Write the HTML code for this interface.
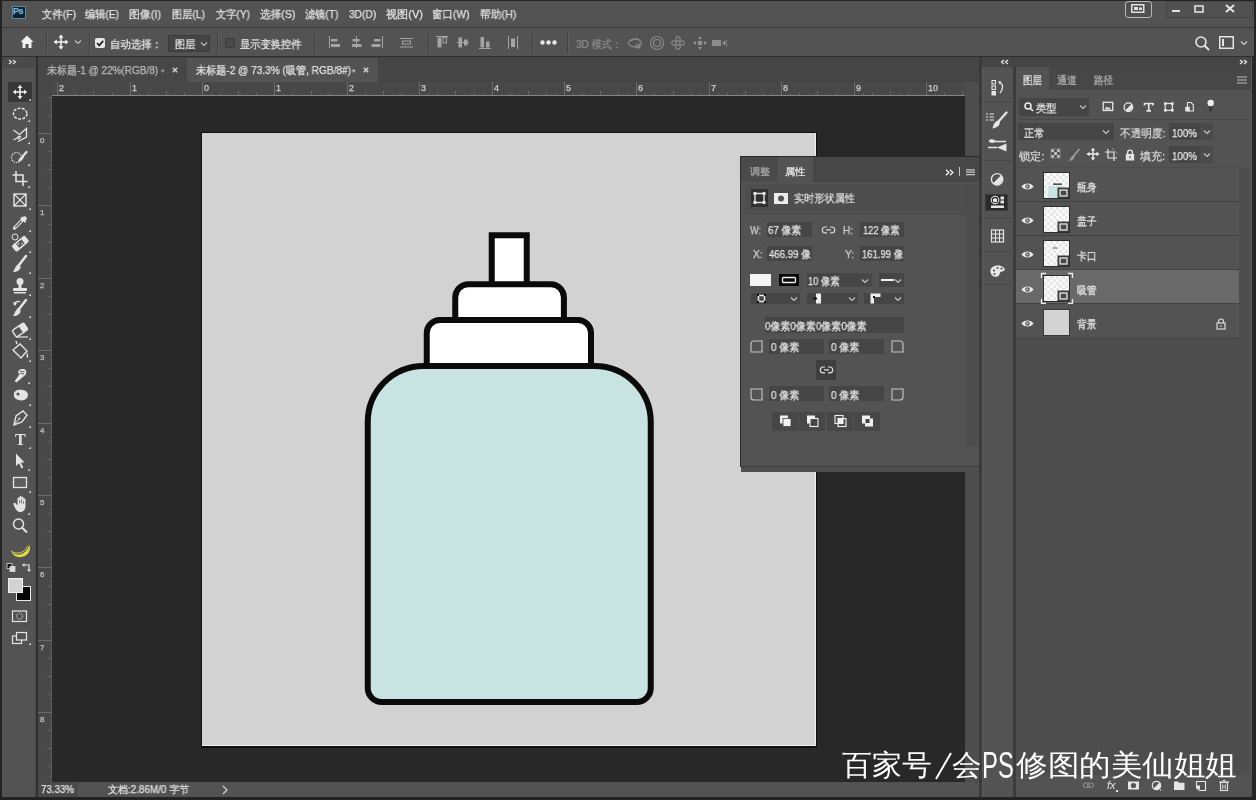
<!DOCTYPE html>
<html><head><meta charset="utf-8">
<style>
*{margin:0;padding:0;box-sizing:border-box}
html,body{width:1256px;height:800px;overflow:hidden;background:#262626;font-family:"Liberation Sans",sans-serif;color:#d8d8d8}
.a{position:absolute}
.t{position:absolute;white-space:nowrap;font-family:"Liberation Sans",sans-serif;-webkit-text-stroke-width:0.25px}
.w{-webkit-text-stroke-width:0}
.t{will-change:transform}
svg{position:absolute;overflow:visible}
</style></head><body>
<div class="a" style="left:0px;top:0px;width:1256px;height:800px;background:#232323;"></div>
<div class="a" style="left:2px;top:1px;width:1252px;height:26px;background:#535353;"></div>
<div class="a" style="left:12px;top:6px;width:14px;height:13px;background:#0c2233;border:1px solid #5b8aa6"></div>
<div class="t" style="left:13px;top:6px;font-size:9px;line-height:11px;color:#7fb4d8;font-weight:bold;letter-spacing:-0.5px;">Ps</div>
<div class="t" style="left:41.5px;top:8px;font-size:11px;line-height:13px;color:#e2e2e2;;transform:scaleX(0.9432);transform-origin:0 0;">文件(F)</div>
<div class="t" style="left:85.3px;top:8px;font-size:11px;line-height:13px;color:#e2e2e2;;transform:scaleX(0.9271);transform-origin:0 0;">编辑(E)</div>
<div class="t" style="left:129.0px;top:8px;font-size:11px;line-height:13px;color:#e2e2e2;;transform:scaleX(0.9879);transform-origin:0 0;">图像(I)</div>
<div class="t" style="left:171.8px;top:8px;font-size:11px;line-height:13px;color:#e2e2e2;;transform:scaleX(0.9308);transform-origin:0 0;">图层(L)</div>
<div class="t" style="left:215.5px;top:8px;font-size:11px;line-height:13px;color:#e2e2e2;;transform:scaleX(0.9271);transform-origin:0 0;">文字(Y)</div>
<div class="t" style="left:259.9px;top:8px;font-size:11px;line-height:13px;color:#e2e2e2;;transform:scaleX(0.9653);transform-origin:0 0;">选择(S)</div>
<div class="t" style="left:305.0px;top:8px;font-size:11px;line-height:13px;color:#e2e2e2;;transform:scaleX(0.9238);transform-origin:0 0;">滤镜(T)</div>
<div class="t" style="left:349.1px;top:8px;font-size:11px;line-height:13px;color:#e2e2e2;;transform:scaleX(0.9269);transform-origin:0 0;">3D(D)</div>
<div class="t" style="left:386.1px;top:8px;font-size:11px;line-height:13px;color:#e2e2e2;;transform:scaleX(1.0089);transform-origin:0 0;">视图(V)</div>
<div class="t" style="left:431.8px;top:8px;font-size:11px;line-height:13px;color:#e2e2e2;;transform:scaleX(0.9467);transform-origin:0 0;">窗口(W)</div>
<div class="t" style="left:480.2px;top:8px;font-size:11px;line-height:13px;color:#e2e2e2;;transform:scaleX(0.9790);transform-origin:0 0;">帮助(H)</div>
<div class="a" style="left:1125px;top:1px;width:27px;height:17px;background:#505050;border:1px solid #b8b8b8;border-radius:3px"></div>
<svg style="left:1131px;top:4px;" width="15" height="10" viewBox="0 0 15 10"><rect x="0.75" y="0.75" width="12" height="7.5" fill="none" stroke="#e0e0e0" stroke-width="1.5"/><rect x="3" y="3" width="4" height="3" fill="#e0e0e0"/><rect x="8" y="3.5" width="3" height="2.5" fill="#e0e0e0"/></svg>
<div class="a" style="left:1166px;top:1px;width:87px;height:17px;background:#515151;border:1px solid #464646"></div>
<div class="a" style="left:1172px;top:10px;width:8px;height:2px;background:#e0e0e0;"></div>
<svg style="left:1194px;top:5px;" width="10" height="8" viewBox="0 0 10 8"><rect x="1" y="1" width="8" height="6" fill="none" stroke="#e0e0e0" stroke-width="1.6"/></svg>
<svg style="left:1225px;top:4px;" width="10" height="9" viewBox="0 0 10 9"><path d="M1 1L9 8M9 1L1 8" stroke="#e8e8e8" stroke-width="1.8"/></svg>
<div class="a" style="left:2px;top:27px;width:1252px;height:1px;background:#3a3a3a;"></div>
<div class="a" style="left:2px;top:28px;width:1252px;height:28px;background:#535353;"></div>
<div class="a" style="left:2px;top:56px;width:1252px;height:1px;background:#2e2e2e;"></div>
<svg style="left:20px;top:35px;" width="14" height="14" viewBox="0 0 14 14"><path d="M7 0.5L0.5 7H2.5V13H5.5V9H8.5V13H11.5V7H13.5Z" fill="#f0f0f0"/></svg>
<div class="a" style="left:46px;top:33px;width:1px;height:20px;background:#404040;"></div>
<div class="a" style="left:47px;top:33px;width:1px;height:20px;background:#5e5e5e;"></div>
<svg style="left:0px;top:0px;" width="1" height="1" viewBox="0 0 1 1"><g transform="translate(61,42) scale(1.0)"><path d="M0 -6.5V6.5M-6.5 0H6.5" stroke="#eeeeee" stroke-width="1.6"/><path d="M0 -7.5L-2.6 -4.2H2.6Z M0 7.5L-2.6 4.2H2.6Z M-7.5 0L-4.2 -2.6V2.6Z M7.5 0L4.2 -2.6V2.6Z" fill="#eeeeee"/></g></svg>
<svg style="left:74px;top:39px;" width="9" height="6" viewBox="0 0 9 6"><path d="M1 1.5L4 4.5L7 1.5" fill="none" stroke="#bdbdbd" stroke-width="1.2"/></svg>
<div class="a" style="left:89px;top:33px;width:1px;height:20px;background:#404040;"></div>
<div class="a" style="left:90px;top:33px;width:1px;height:20px;background:#5e5e5e;"></div>
<div class="a" style="left:95px;top:38px;width:10px;height:10px;background:#e8e8e8;border-radius:2px"></div>
<svg style="left:95px;top:38px;" width="10" height="10" viewBox="0 0 10 10"><path d="M2 5L4.2 7.3L8.2 2.8" fill="none" stroke="#222" stroke-width="1.8"/></svg>
<div class="t" style="left:109.5px;top:38px;font-size:11px;line-height:13px;color:#e2e2e2;;transform:scaleX(0.9455);transform-origin:0 0;">自动选择：</div>
<div class="a" style="left:168px;top:35px;width:42px;height:17px;background:#454545;border:1px solid #3c3c3c"></div>
<div class="t" style="left:174.5px;top:38px;font-size:11px;line-height:13px;color:#e6e6e6;;transform:scaleX(0.9318);transform-origin:0 0;">图层</div>
<svg style="left:200px;top:41px;" width="9" height="6" viewBox="0 0 9 6"><path d="M1 1.5L4 4.5L7 1.5" fill="none" stroke="#bdbdbd" stroke-width="1.2"/></svg>
<div class="a" style="left:217px;top:33px;width:1px;height:20px;background:#404040;"></div>
<div class="a" style="left:218px;top:33px;width:1px;height:20px;background:#5e5e5e;"></div>
<div class="a" style="left:225px;top:38px;width:10px;height:10px;background:#4a4a4a;border:1px solid #3a3a3a;border-radius:2px"></div>
<div class="t" style="left:239.5px;top:38px;font-size:11px;line-height:13px;color:#e2e2e2;;transform:scaleX(0.9318);transform-origin:0 0;">显示变换控件</div>
<div class="a" style="left:314px;top:33px;width:1px;height:20px;background:#404040;"></div>
<div class="a" style="left:315px;top:33px;width:1px;height:20px;background:#5e5e5e;"></div>
<svg style="left:0px;top:0px;" width="1" height="1" viewBox="0 0 1 1"><g fill="#a4a4a4"><rect x="329" y="36" width="1" height="12"/><rect x="331" y="39" width="6.5" height="2.5"/><rect x="331" y="44" width="9" height="3"/></g><g fill="#a4a4a4"><rect x="356" y="36" width="1" height="12"/><rect x="352.5" y="39" width="7" height="2.5"/><rect x="352" y="44" width="9.5" height="3"/></g><g fill="#a4a4a4"><rect x="382" y="36" width="1" height="12"/><rect x="374" y="39" width="6.5" height="2.5"/><rect x="371.5" y="44" width="9" height="3"/></g><g fill="#a4a4a4"><rect x="400" y="38" width="13" height="1"/><rect x="402.5" y="41" width="8" height="3" fill="none" stroke="#a4a4a4" stroke-width="1"/><rect x="400" y="46.5" width="13" height="1"/></g><g fill="#a4a4a4"><rect x="436" y="36" width="12" height="1"/><rect x="437.5" y="37.5" width="4" height="10"/><rect x="443" y="37.5" width="3.5" height="5.5" fill="none" stroke="#a4a4a4" stroke-width="1"/></g><g fill="#a4a4a4"><rect x="457" y="42" width="12" height="1"/><rect x="458.5" y="37.5" width="3.5" height="10"/><rect x="464" y="39.5" width="3.5" height="6"/></g><g fill="#a4a4a4"><rect x="479" y="48" width="12" height="1"/><rect x="480.5" y="37" width="3.5" height="10.5"/><rect x="486" y="41.5" width="3.5" height="6"/></g><g fill="#a4a4a4"><rect x="508" y="36" width="1" height="13"/><rect x="511" y="38.5" width="4" height="8.5"/><rect x="517" y="36" width="1" height="13"/></g></svg>
<div class="a" style="left:428px;top:33px;width:1px;height:20px;background:#404040;"></div>
<div class="a" style="left:429px;top:33px;width:1px;height:20px;background:#5e5e5e;"></div>
<div class="a" style="left:532px;top:33px;width:1px;height:20px;background:#404040;"></div>
<div class="a" style="left:533px;top:33px;width:1px;height:20px;background:#5e5e5e;"></div>
<svg style="left:540px;top:40px;" width="20" height="5" viewBox="0 0 20 5"><circle cx="2.5" cy="2.5" r="2.2" fill="#e8e8e8"/><circle cx="8.5" cy="2.5" r="2.2" fill="#e8e8e8"/><circle cx="14.5" cy="2.5" r="2.2" fill="#e8e8e8"/></svg>
<div class="a" style="left:567px;top:33px;width:1px;height:20px;background:#404040;"></div>
<div class="a" style="left:568px;top:33px;width:1px;height:20px;background:#5e5e5e;"></div>
<div class="t" style="left:575.5px;top:38px;font-size:11px;line-height:13px;color:#8c8c8c;;transform:scaleX(0.9177);transform-origin:0 0;">3D 模式：</div>
<svg style="left:0px;top:0px;" width="1" height="1" viewBox="0 0 1 1">
<g transform="translate(635,43)" fill="none" stroke="#8e8e8e" stroke-width="1.1"><ellipse cx="0" cy="0" rx="6.5" ry="4"/><path d="M-4 -2C-1 -5 3 -5 5 -2"/><circle cx="3" cy="3" r="2"/></g>
<g transform="translate(657,43)" fill="none" stroke="#8e8e8e" stroke-width="1.1"><circle r="6.5"/><circle r="3.5"/></g>
<g transform="translate(678,43)" fill="none" stroke="#8e8e8e" stroke-width="1.1"><circle cx="0" cy="-4" r="2.2"/><circle cx="0" cy="4" r="2.2"/><circle cx="-4" cy="0" r="2.2"/><circle cx="4" cy="0" r="2.2"/></g>
<g transform="translate(700,43)" fill="#8e8e8e"><circle r="2.5"/><path d="M0 -7L-2 -4H2Z M0 7L-2 4H2Z M-7 0L-4 -2V2Z M7 0L4 -2V2Z"/></g>
<g transform="translate(712,39)" fill="#8e8e8e"><rect x="0" y="1" width="9" height="6"/><path d="M10 4L13 1.5V6.5Z"/><path d="M15 0.5C13.5 2.5 13.5 5.5 15 7.5" fill="none" stroke="#8e8e8e" stroke-width="1"/></g>
</svg>
<svg style="left:1195px;top:36px;" width="16" height="16" viewBox="0 0 16 16"><circle cx="6" cy="6" r="5" fill="none" stroke="#e6e6e6" stroke-width="1.6"/><path d="M9.5 9.5L14 14" stroke="#e6e6e6" stroke-width="2"/></svg>
<svg style="left:1219px;top:36px;" width="16" height="14" viewBox="0 0 16 14"><rect x="0.75" y="0.75" width="13.5" height="11.5" fill="none" stroke="#e6e6e6" stroke-width="1.5"/><rect x="3" y="3" width="2" height="7" fill="#e6e6e6"/></svg>
<svg style="left:1240px;top:40px;" width="9" height="6" viewBox="0 0 9 6"><path d="M1 1.5L4 4.5L7 1.5" fill="none" stroke="#cfcfcf" stroke-width="1.2"/></svg>
<div class="a" style="left:2px;top:57px;width:34px;height:740px;background:#535353;"></div>
<div class="a" style="left:35px;top:57px;width:1px;height:740px;background:#474747;"></div>
<div class="a" style="left:36px;top:57px;width:2px;height:740px;background:#2f2f2f;"></div>
<div class="a" style="left:2px;top:57px;width:34px;height:10px;background:#4a4a4a;"></div>
<svg style="left:8px;top:59px;" width="10" height="6" viewBox="0 0 10 6"><path d="M1 1L3.5 3L1 5M5 1L7.5 3L5 5" fill="none" stroke="#e0e0e0" stroke-width="1.2"/></svg>
<div class="a" style="left:5px;top:67px;width:28px;height:1px;background:#474747;"></div>
<div class="a" style="left:8px;top:82px;width:24px;height:20px;background:#383838;"></div>
<div class="t" style="left:15px;top:431px;font-size:16px;line-height:18px;color:#e4e4e4;font-family:'Liberation Serif',serif;font-weight:bold;-webkit-text-stroke-width:0">T</div>
<svg style="left:0px;top:0px;" width="1" height="1" viewBox="0 0 1 1"><g transform="translate(20,92) scale(0.95)"><path d="M0 -6.5V6.5M-6.5 0H6.5" stroke="#f0f0f0" stroke-width="1.6"/><path d="M0 -7.5L-2.6 -4.2H2.6Z M0 7.5L-2.6 4.2H2.6Z M-7.5 0L-4.2 -2.6V2.6Z M7.5 0L4.2 -2.6V2.6Z" fill="#f0f0f0"/></g><path d="M31 101L28.5 101L31 98.5Z" fill="#cfcfcf"/><ellipse cx="20.2" cy="113.6" rx="6.8" ry="5.4" fill="none" stroke="#e4e4e4" stroke-width="1.5" stroke-dasharray="3 1.3"/><path d="M30 122L27.5 122L30 119.5Z" fill="#cfcfcf"/><path d="M13.5 130L19.5 134.5L26.5 128.5L26.5 137L18 141.5" fill="none" stroke="#e4e4e4" stroke-width="1.3"/><path d="M13.5 140L21 136" stroke="#e4e4e4" stroke-width="1.2"/><circle cx="19" cy="137.5" r="1.4" fill="none" stroke="#e4e4e4" stroke-width="1"/><path d="M30 144L27.5 144L30 141.5Z" fill="#cfcfcf"/><circle cx="16.5" cy="157.5" r="5" fill="none" stroke="#e4e4e4" stroke-width="1.2" stroke-dasharray="1.3 1"/><path d="M26.5 152L23 156" stroke="#e4e4e4" stroke-width="2.2" stroke-linecap="round"/><path d="M23.5 155.5C21 156 18.5 159 18 162C21 161.5 23.5 159 24 157Z" fill="#e4e4e4"/><path d="M30 166L27.5 166L30 163.5Z" fill="#cfcfcf"/><path d="M16 171V181.5H27.5M12.5 175H23V186" fill="none" stroke="#e4e4e4" stroke-width="1.6"/><path d="M30 188L27.5 188L30 185.5Z" fill="#cfcfcf"/><rect x="14" y="194" width="12" height="12" fill="none" stroke="#e4e4e4" stroke-width="1.4"/><path d="M14 194L26 206M26 194L14 206" stroke="#e4e4e4" stroke-width="1.1"/><path d="M31 210L28.5 210L31 207.5Z" fill="#cfcfcf"/><path d="M14.5 228L22 220.5" stroke="#e4e4e4" stroke-width="3.2" stroke-linecap="round"/><path d="M15.2 227.3L21.5 221" stroke="#535353" stroke-width="1.2"/><path d="M21 217.5L25.5 222" stroke="#e4e4e4" stroke-width="2.2"/><circle cx="24.5" cy="218.5" r="2.3" fill="#e4e4e4"/><path d="M31 232L28.5 232L31 229.5Z" fill="#cfcfcf"/><g transform="rotate(-40 20 244)"><rect x="12" y="240" width="17" height="8" rx="2" fill="#e4e4e4"/><rect x="17" y="241.5" width="7" height="5" fill="#535353"/><circle cx="19" cy="243" r="0.8" fill="#e4e4e4"/><circle cx="22" cy="245" r="0.8" fill="#e4e4e4"/></g><circle cx="15" cy="237" r="3" fill="none" stroke="#e4e4e4" stroke-width="1"/><path d="M31 253L28.5 253L31 250.5Z" fill="#cfcfcf"/><path d="M26 256L19 265" stroke="#e4e4e4" stroke-width="2.5" stroke-linecap="round"/><path d="M19 264C15 265 15 270 13 272C17 272 21 270 20.5 266Z" fill="#e4e4e4"/><path d="M31 274L28.5 274L31 271.5Z" fill="#cfcfcf"/><circle cx="20" cy="281.5" r="3.5" fill="#e4e4e4"/><rect x="18.5" y="284" width="3" height="4" fill="#e4e4e4"/><rect x="13" y="288" width="14" height="3" rx="1" fill="#e4e4e4"/><rect x="14" y="292" width="12" height="1.5" fill="#e4e4e4"/><path d="M31 296L28.5 296L31 293.5Z" fill="#cfcfcf"/><path d="M26 300L19 309" stroke="#e4e4e4" stroke-width="2.5" stroke-linecap="round"/><path d="M19 308C15 309 15 314 13 316C17 316 21 314 20.5 310Z" fill="#e4e4e4"/><path d="M14 305A4 4 0 0 1 20 302" fill="none" stroke="#e4e4e4" stroke-width="1.2"/><path d="M13 302L15 306L17 303Z" fill="#e4e4e4"/><path d="M31 318L28.5 318L31 315.5Z" fill="#cfcfcf"/><g transform="rotate(-35 20 330)"><rect x="13" y="326" width="14" height="8" rx="1.5" fill="none" stroke="#e4e4e4" stroke-width="1.4"/><rect x="21" y="326" width="6" height="8" fill="#e4e4e4"/></g><path d="M16 337H28" stroke="#e4e4e4" stroke-width="1.2"/><path d="M31 340L28.5 340L31 337.5Z" fill="#cfcfcf"/><path d="M13 350L20 344L27 351L21 358Z" fill="none" stroke="#e4e4e4" stroke-width="1.4"/><path d="M17 344L16 341" stroke="#e4e4e4" stroke-width="1.3"/><path d="M27 352C28 355 29 357 27.5 358C26 357 26.5 355 27 352Z" fill="#e4e4e4"/><path d="M31 362L28.5 362L31 359.5Z" fill="#cfcfcf"/><path d="M18.5 371C20 368.5 24.5 368.5 26 370.5C27 372.5 25.5 375.5 23.5 376.5L17 382C15.8 382.8 14.5 381.5 15.2 380.3L19.5 374.5C18.3 373.5 18 372 18.5 371Z" fill="#e4e4e4"/><path d="M20 371.3L24.5 371.8M19.8 373.3L24 374" stroke="#535353" stroke-width="0.9"/><path d="M30 384L27.5 384L30 381.5Z" fill="#cfcfcf"/><path d="M14 395C13 391 18 389 23 390C28 391 29 395 27 398C25 401 19 401 16 399C14 398 14 396 14 395Z" fill="#e4e4e4"/><circle cx="18" cy="394" r="1.6" fill="#535353"/><path d="M31 406L28.5 406L31 403.5Z" fill="#cfcfcf"/><path d="M14 425L16 416L23 411L27 415L22 422L14 425Z" fill="none" stroke="#e4e4e4" stroke-width="1.4"/><path d="M14 425L19 419" stroke="#e4e4e4" stroke-width="1"/><circle cx="19.5" cy="418.5" r="1" fill="#e4e4e4"/><path d="M31 428L28.5 428L31 425.5Z" fill="#cfcfcf"/><path d="M31 449L28.5 449L31 446.5Z" fill="#cfcfcf"/><path d="M16 453.5V466L19 463.3L21.5 468.5L23.3 467.6L20.8 462.5H24.5Z" fill="#e4e4e4"/><path d="M30 471L27.5 471L30 468.5Z" fill="#cfcfcf"/><rect x="13.5" y="477.5" width="13" height="10" fill="#5e5e5e" stroke="#e4e4e4" stroke-width="1.3"/><path d="M31 493L28.5 493L31 490.5Z" fill="#cfcfcf"/><path d="M13.5 504.5C13 503 14.5 502.3 15.5 503.3L17.5 505.5V498.5C17.5 497.2 19.5 497.2 19.5 498.5V503.5V497C19.5 495.7 21.5 495.7 21.5 497V503.5V497.8C21.5 496.5 23.5 496.5 23.5 497.8V503.8V499.5C23.5 498.3 25.5 498.3 25.5 499.5V506C25.5 509.5 23.5 512 20.5 512C17.5 512 16 510.5 13.5 504.5Z" fill="#e4e4e4"/><path d="M19.5 503.5V500M21.5 503.5V499M23.5 503.8V501" stroke="#535353" stroke-width="0.7"/><path d="M30 515L27.5 515L30 512.5Z" fill="#cfcfcf"/><circle cx="18.5" cy="524" r="5" fill="none" stroke="#e4e4e4" stroke-width="1.5"/><path d="M22 527.5L27 532.5" stroke="#e4e4e4" stroke-width="2"/><path d="M11 550.5C14 556.5 25 557 29.5 545C31 549 29 554 25 556C19 558.5 13 557 11 550.5Z" fill="#e2dc3c"/><path d="M11.5 551C15 554 23 555 28 546" fill="none" stroke="#f4f08a" stroke-width="0.8"/><path d="M28.5 543.5L30 545.5" stroke="#707028" stroke-width="1.5"/><rect x="7" y="563.5" width="5" height="5" fill="#111" stroke="#ddd" stroke-width="0.8"/><rect x="10" y="566.5" width="5" height="5" fill="#ddd" stroke="#ddd" stroke-width="0.8"/><path d="M24 565H29V570" fill="none" stroke="#e4e4e4" stroke-width="1.2"/><path d="M22 565L24.5 563V567Z M29 572L27 569.5H31Z" fill="#e4e4e4"/></svg>
<div class="a" style="left:16px;top:586px;width:15px;height:15px;background:#050505;border:1px solid #e8e8e8"></div>
<div class="a" style="left:8px;top:578px;width:15px;height:15px;background:#d3d3d3;border:1px solid #f2f2f2"></div>
<svg style="left:0px;top:0px;" width="1" height="1" viewBox="0 0 1 1"><rect x="12.5" y="611" width="14" height="10.5" fill="none" stroke="#e4e4e4" stroke-width="1.2"/><circle cx="19.5" cy="616.2" r="3" fill="none" stroke="#e4e4e4" stroke-width="1" stroke-dasharray="1.2 1"/><rect x="12.5" y="636" width="9" height="7.5" fill="#535353" stroke="#e4e4e4" stroke-width="1.2"/><rect x="16.5" y="632.5" width="10" height="7.5" fill="#535353" stroke="#e4e4e4" stroke-width="1.2"/><path d="M31 645L28.5 645L31 642.5Z" fill="#cfcfcf"/></svg>
<div class="a" style="left:38px;top:57px;width:941px;height:25px;background:#454545;"></div>
<div class="a" style="left:39px;top:58px;width:146px;height:24px;background:#474747;"></div>
<div class="t" style="left:47px;top:64px;font-size:11px;line-height:13px;color:#bcbcbc;;transform:scaleX(0.9067);transform-origin:0 0;">未标题-1 @ 22%(RGB/8)</div>
<div class="t" style="left:161px;top:67px;font-size:9px;line-height:11px;color:#9a9a9a;;">*</div>
<svg style="left:172px;top:67px;" width="6" height="6" viewBox="0 0 6 6"><path d="M0.8 0.8L5.2 5.2M5.2 0.8L0.8 5.2" stroke="#d0d0d0" stroke-width="1.4"/></svg>
<div class="a" style="left:187px;top:58px;width:191px;height:24px;background:#535353;"></div>
<div class="t" style="left:195.5px;top:64px;font-size:11px;line-height:13px;color:#e4e4e4;;transform:scaleX(0.9178);transform-origin:0 0;">未标题-2 @ 73.3% (吸管, RGB/8#)</div>
<div class="t" style="left:352px;top:67px;font-size:9px;line-height:11px;color:#c0c0c0;;">*</div>
<svg style="left:363px;top:67px;" width="6" height="6" viewBox="0 0 6 6"><path d="M0.8 0.8L5.2 5.2M5.2 0.8L0.8 5.2" stroke="#d8d8d8" stroke-width="1.4"/></svg>
<div class="a" style="left:38px;top:82px;width:927px;height:14px;background:#484848;"></div>
<div class="a" style="left:38px;top:96px;width:14px;height:686px;background:#484848;"></div>
<div class="a" style="left:38px;top:82px;width:14px;height:14px;background:#474747;"></div>
<div class="a" style="left:52px;top:95px;width:913px;height:1px;background:#858585;"></div>
<div class="a" style="left:51px;top:96px;width:1px;height:686px;background:#5c5c5c;"></div>
<svg style="left:0px;top:0px;" width="1" height="1" viewBox="0 0 1 1"><rect x="57" y="82" width="1" height="13" fill="#6c6c6c"/><rect x="66" y="93" width="1" height="2" fill="#5c5c5c"/><rect x="75" y="92" width="1" height="3" fill="#626262"/><rect x="84" y="93" width="1" height="2" fill="#5c5c5c"/><rect x="93" y="91" width="1" height="4" fill="#6a6a6a"/><rect x="102" y="93" width="1" height="2" fill="#5c5c5c"/><rect x="112" y="92" width="1" height="3" fill="#626262"/><rect x="121" y="93" width="1" height="2" fill="#5c5c5c"/><rect x="130" y="82" width="1" height="13" fill="#6c6c6c"/><rect x="139" y="93" width="1" height="2" fill="#5c5c5c"/><rect x="148" y="92" width="1" height="3" fill="#626262"/><rect x="157" y="93" width="1" height="2" fill="#5c5c5c"/><rect x="166" y="91" width="1" height="4" fill="#6a6a6a"/><rect x="175" y="93" width="1" height="2" fill="#5c5c5c"/><rect x="184" y="92" width="1" height="3" fill="#626262"/><rect x="193" y="93" width="1" height="2" fill="#5c5c5c"/><rect x="202" y="82" width="1" height="13" fill="#6c6c6c"/><rect x="211" y="93" width="1" height="2" fill="#5c5c5c"/><rect x="220" y="92" width="1" height="3" fill="#626262"/><rect x="229" y="93" width="1" height="2" fill="#5c5c5c"/><rect x="238" y="91" width="1" height="4" fill="#6a6a6a"/><rect x="247" y="93" width="1" height="2" fill="#5c5c5c"/><rect x="256" y="92" width="1" height="3" fill="#626262"/><rect x="265" y="93" width="1" height="2" fill="#5c5c5c"/><rect x="274" y="82" width="1" height="13" fill="#6c6c6c"/><rect x="283" y="93" width="1" height="2" fill="#5c5c5c"/><rect x="292" y="92" width="1" height="3" fill="#626262"/><rect x="302" y="93" width="1" height="2" fill="#5c5c5c"/><rect x="311" y="91" width="1" height="4" fill="#6a6a6a"/><rect x="320" y="93" width="1" height="2" fill="#5c5c5c"/><rect x="329" y="92" width="1" height="3" fill="#626262"/><rect x="338" y="93" width="1" height="2" fill="#5c5c5c"/><rect x="347" y="82" width="1" height="13" fill="#6c6c6c"/><rect x="356" y="93" width="1" height="2" fill="#5c5c5c"/><rect x="365" y="92" width="1" height="3" fill="#626262"/><rect x="374" y="93" width="1" height="2" fill="#5c5c5c"/><rect x="383" y="91" width="1" height="4" fill="#6a6a6a"/><rect x="392" y="93" width="1" height="2" fill="#5c5c5c"/><rect x="401" y="92" width="1" height="3" fill="#626262"/><rect x="410" y="93" width="1" height="2" fill="#5c5c5c"/><rect x="419" y="82" width="1" height="13" fill="#6c6c6c"/><rect x="428" y="93" width="1" height="2" fill="#5c5c5c"/><rect x="437" y="92" width="1" height="3" fill="#626262"/><rect x="446" y="93" width="1" height="2" fill="#5c5c5c"/><rect x="455" y="91" width="1" height="4" fill="#6a6a6a"/><rect x="464" y="93" width="1" height="2" fill="#5c5c5c"/><rect x="474" y="92" width="1" height="3" fill="#626262"/><rect x="483" y="93" width="1" height="2" fill="#5c5c5c"/><rect x="492" y="82" width="1" height="13" fill="#6c6c6c"/><rect x="501" y="93" width="1" height="2" fill="#5c5c5c"/><rect x="510" y="92" width="1" height="3" fill="#626262"/><rect x="519" y="93" width="1" height="2" fill="#5c5c5c"/><rect x="528" y="91" width="1" height="4" fill="#6a6a6a"/><rect x="537" y="93" width="1" height="2" fill="#5c5c5c"/><rect x="546" y="92" width="1" height="3" fill="#626262"/><rect x="555" y="93" width="1" height="2" fill="#5c5c5c"/><rect x="564" y="82" width="1" height="13" fill="#6c6c6c"/><rect x="573" y="93" width="1" height="2" fill="#5c5c5c"/><rect x="582" y="92" width="1" height="3" fill="#626262"/><rect x="591" y="93" width="1" height="2" fill="#5c5c5c"/><rect x="600" y="91" width="1" height="4" fill="#6a6a6a"/><rect x="609" y="93" width="1" height="2" fill="#5c5c5c"/><rect x="618" y="92" width="1" height="3" fill="#626262"/><rect x="627" y="93" width="1" height="2" fill="#5c5c5c"/><rect x="636" y="82" width="1" height="13" fill="#6c6c6c"/><rect x="645" y="93" width="1" height="2" fill="#5c5c5c"/><rect x="654" y="92" width="1" height="3" fill="#626262"/><rect x="664" y="93" width="1" height="2" fill="#5c5c5c"/><rect x="673" y="91" width="1" height="4" fill="#6a6a6a"/><rect x="682" y="93" width="1" height="2" fill="#5c5c5c"/><rect x="691" y="92" width="1" height="3" fill="#626262"/><rect x="700" y="93" width="1" height="2" fill="#5c5c5c"/><rect x="709" y="82" width="1" height="13" fill="#6c6c6c"/><rect x="718" y="93" width="1" height="2" fill="#5c5c5c"/><rect x="727" y="92" width="1" height="3" fill="#626262"/><rect x="736" y="93" width="1" height="2" fill="#5c5c5c"/><rect x="745" y="91" width="1" height="4" fill="#6a6a6a"/><rect x="754" y="93" width="1" height="2" fill="#5c5c5c"/><rect x="763" y="92" width="1" height="3" fill="#626262"/><rect x="772" y="93" width="1" height="2" fill="#5c5c5c"/><rect x="781" y="82" width="1" height="13" fill="#6c6c6c"/><rect x="790" y="93" width="1" height="2" fill="#5c5c5c"/><rect x="799" y="92" width="1" height="3" fill="#626262"/><rect x="808" y="93" width="1" height="2" fill="#5c5c5c"/><rect x="817" y="91" width="1" height="4" fill="#6a6a6a"/><rect x="826" y="93" width="1" height="2" fill="#5c5c5c"/><rect x="836" y="92" width="1" height="3" fill="#626262"/><rect x="845" y="93" width="1" height="2" fill="#5c5c5c"/><rect x="854" y="82" width="1" height="13" fill="#6c6c6c"/><rect x="863" y="93" width="1" height="2" fill="#5c5c5c"/><rect x="872" y="92" width="1" height="3" fill="#626262"/><rect x="881" y="93" width="1" height="2" fill="#5c5c5c"/><rect x="890" y="91" width="1" height="4" fill="#6a6a6a"/><rect x="899" y="93" width="1" height="2" fill="#5c5c5c"/><rect x="908" y="92" width="1" height="3" fill="#626262"/><rect x="917" y="93" width="1" height="2" fill="#5c5c5c"/><rect x="926" y="82" width="1" height="13" fill="#6c6c6c"/><rect x="935" y="93" width="1" height="2" fill="#5c5c5c"/><rect x="944" y="92" width="1" height="3" fill="#626262"/><rect x="953" y="93" width="1" height="2" fill="#5c5c5c"/><rect x="962" y="91" width="1" height="4" fill="#6a6a6a"/><rect x="47" y="97" width="4" height="1" fill="#6a6a6a"/><rect x="49" y="106" width="2" height="1" fill="#5c5c5c"/><rect x="48" y="115" width="3" height="1" fill="#626262"/><rect x="49" y="124" width="2" height="1" fill="#5c5c5c"/><rect x="38" y="133" width="13" height="1" fill="#6c6c6c"/><rect x="49" y="142" width="2" height="1" fill="#5c5c5c"/><rect x="48" y="151" width="3" height="1" fill="#626262"/><rect x="49" y="160" width="2" height="1" fill="#5c5c5c"/><rect x="47" y="169" width="4" height="1" fill="#6a6a6a"/><rect x="49" y="178" width="2" height="1" fill="#5c5c5c"/><rect x="48" y="187" width="3" height="1" fill="#626262"/><rect x="49" y="196" width="2" height="1" fill="#5c5c5c"/><rect x="38" y="205" width="13" height="1" fill="#6c6c6c"/><rect x="49" y="214" width="2" height="1" fill="#5c5c5c"/><rect x="48" y="224" width="3" height="1" fill="#626262"/><rect x="49" y="233" width="2" height="1" fill="#5c5c5c"/><rect x="47" y="242" width="4" height="1" fill="#6a6a6a"/><rect x="49" y="251" width="2" height="1" fill="#5c5c5c"/><rect x="48" y="260" width="3" height="1" fill="#626262"/><rect x="49" y="269" width="2" height="1" fill="#5c5c5c"/><rect x="38" y="278" width="13" height="1" fill="#6c6c6c"/><rect x="49" y="287" width="2" height="1" fill="#5c5c5c"/><rect x="48" y="296" width="3" height="1" fill="#626262"/><rect x="49" y="305" width="2" height="1" fill="#5c5c5c"/><rect x="47" y="314" width="4" height="1" fill="#6a6a6a"/><rect x="49" y="323" width="2" height="1" fill="#5c5c5c"/><rect x="48" y="332" width="3" height="1" fill="#626262"/><rect x="49" y="341" width="2" height="1" fill="#5c5c5c"/><rect x="38" y="350" width="13" height="1" fill="#6c6c6c"/><rect x="49" y="359" width="2" height="1" fill="#5c5c5c"/><rect x="48" y="368" width="3" height="1" fill="#626262"/><rect x="49" y="377" width="2" height="1" fill="#5c5c5c"/><rect x="47" y="386" width="4" height="1" fill="#6a6a6a"/><rect x="49" y="395" width="2" height="1" fill="#5c5c5c"/><rect x="48" y="404" width="3" height="1" fill="#626262"/><rect x="49" y="414" width="2" height="1" fill="#5c5c5c"/><rect x="38" y="423" width="13" height="1" fill="#6c6c6c"/><rect x="49" y="432" width="2" height="1" fill="#5c5c5c"/><rect x="48" y="441" width="3" height="1" fill="#626262"/><rect x="49" y="450" width="2" height="1" fill="#5c5c5c"/><rect x="47" y="459" width="4" height="1" fill="#6a6a6a"/><rect x="49" y="468" width="2" height="1" fill="#5c5c5c"/><rect x="48" y="477" width="3" height="1" fill="#626262"/><rect x="49" y="486" width="2" height="1" fill="#5c5c5c"/><rect x="38" y="495" width="13" height="1" fill="#6c6c6c"/><rect x="49" y="504" width="2" height="1" fill="#5c5c5c"/><rect x="48" y="513" width="3" height="1" fill="#626262"/><rect x="49" y="522" width="2" height="1" fill="#5c5c5c"/><rect x="47" y="531" width="4" height="1" fill="#6a6a6a"/><rect x="49" y="540" width="2" height="1" fill="#5c5c5c"/><rect x="48" y="549" width="3" height="1" fill="#626262"/><rect x="49" y="558" width="2" height="1" fill="#5c5c5c"/><rect x="38" y="567" width="13" height="1" fill="#6c6c6c"/><rect x="49" y="576" width="2" height="1" fill="#5c5c5c"/><rect x="48" y="586" width="3" height="1" fill="#626262"/><rect x="49" y="595" width="2" height="1" fill="#5c5c5c"/><rect x="47" y="604" width="4" height="1" fill="#6a6a6a"/><rect x="49" y="613" width="2" height="1" fill="#5c5c5c"/><rect x="48" y="622" width="3" height="1" fill="#626262"/><rect x="49" y="631" width="2" height="1" fill="#5c5c5c"/><rect x="38" y="640" width="13" height="1" fill="#6c6c6c"/><rect x="49" y="649" width="2" height="1" fill="#5c5c5c"/><rect x="48" y="658" width="3" height="1" fill="#626262"/><rect x="49" y="667" width="2" height="1" fill="#5c5c5c"/><rect x="47" y="676" width="4" height="1" fill="#6a6a6a"/><rect x="49" y="685" width="2" height="1" fill="#5c5c5c"/><rect x="48" y="694" width="3" height="1" fill="#626262"/><rect x="49" y="703" width="2" height="1" fill="#5c5c5c"/><rect x="38" y="712" width="13" height="1" fill="#6c6c6c"/><rect x="49" y="721" width="2" height="1" fill="#5c5c5c"/><rect x="48" y="730" width="3" height="1" fill="#626262"/><rect x="49" y="739" width="2" height="1" fill="#5c5c5c"/><rect x="47" y="748" width="4" height="1" fill="#6a6a6a"/><rect x="49" y="757" width="2" height="1" fill="#5c5c5c"/><rect x="48" y="766" width="3" height="1" fill="#626262"/><rect x="49" y="776" width="2" height="1" fill="#5c5c5c"/></svg>
<div class="t" style="left:59px;top:83px;font-size:9px;line-height:11px;color:#d0d0d0;;">2</div>
<div class="t" style="left:132px;top:83px;font-size:9px;line-height:11px;color:#d0d0d0;;">1</div>
<div class="t" style="left:204px;top:83px;font-size:9px;line-height:11px;color:#d0d0d0;;">0</div>
<div class="t" style="left:276px;top:83px;font-size:9px;line-height:11px;color:#d0d0d0;;">1</div>
<div class="t" style="left:349px;top:83px;font-size:9px;line-height:11px;color:#d0d0d0;;">2</div>
<div class="t" style="left:421px;top:83px;font-size:9px;line-height:11px;color:#d0d0d0;;">3</div>
<div class="t" style="left:494px;top:83px;font-size:9px;line-height:11px;color:#d0d0d0;;">4</div>
<div class="t" style="left:566px;top:83px;font-size:9px;line-height:11px;color:#d0d0d0;;">5</div>
<div class="t" style="left:638px;top:83px;font-size:9px;line-height:11px;color:#d0d0d0;;">6</div>
<div class="t" style="left:711px;top:83px;font-size:9px;line-height:11px;color:#d0d0d0;;">7</div>
<div class="t" style="left:783px;top:83px;font-size:9px;line-height:11px;color:#d0d0d0;;">8</div>
<div class="t" style="left:856px;top:83px;font-size:9px;line-height:11px;color:#d0d0d0;;">9</div>
<div class="t" style="left:928px;top:83px;font-size:9px;line-height:11px;color:#d0d0d0;;">10</div>
<div class="t" style="left:40px;top:136px;font-size:8px;line-height:10px;color:#c0c0c0;;">0</div>
<div class="t" style="left:40px;top:208px;font-size:8px;line-height:10px;color:#c0c0c0;;">1</div>
<div class="t" style="left:40px;top:281px;font-size:8px;line-height:10px;color:#c0c0c0;;">2</div>
<div class="t" style="left:40px;top:353px;font-size:8px;line-height:10px;color:#c0c0c0;;">3</div>
<div class="t" style="left:40px;top:426px;font-size:8px;line-height:10px;color:#c0c0c0;;">4</div>
<div class="t" style="left:40px;top:498px;font-size:8px;line-height:10px;color:#c0c0c0;;">5</div>
<div class="t" style="left:40px;top:570px;font-size:8px;line-height:10px;color:#c0c0c0;;">6</div>
<div class="t" style="left:40px;top:643px;font-size:8px;line-height:10px;color:#c0c0c0;;">7</div>
<div class="t" style="left:40px;top:715px;font-size:8px;line-height:10px;color:#c0c0c0;;">8</div>
<div class="a" style="left:52px;top:96px;width:913px;height:686px;background:#282828;"></div>
<div class="a" style="left:965px;top:82px;width:14px;height:700px;background:#4d4d4d;"></div>
<div class="a" style="left:201px;top:132px;width:616px;height:616px;background:#111111;"></div>
<div class="a" style="left:202px;top:133px;width:614px;height:613px;background:#d2d2d2;border-right:1px solid #f0f0f0;border-bottom:1px solid #f0f0f0"></div>
<svg style="left:0px;top:0px;" width="1256" height="800" viewBox="0 0 1256 800"><rect x="491.75" y="235.25" width="35.0" height="60" fill="#ffffff" stroke="#0a0a0a" stroke-width="6"/><path d="M468.25,284.25 H550.9 A13,13 0 0 1 563.9,297.25 V326 A4,4 0 0 1 559.9,330 H459.25 A4,4 0 0 1 455.25,326 V297.25 A13,13 0 0 1 468.25,284.25 Z" fill="#ffffff" stroke="#0a0a0a" stroke-width="6"/><path d="M439.75,320.0 H578.0 A13,13 0 0 1 591.0,333.0 V371 A4,4 0 0 1 587.0,375 H430.75 A4,4 0 0 1 426.75,371 V333.0 A13,13 0 0 1 439.75,320.0 Z" fill="#ffffff" stroke="#0a0a0a" stroke-width="6"/><path d="M423.75,366.0 H594.75 A56,56 0 0 1 650.75,422.0 V688.0 A14,14 0 0 1 636.75,702.0 H381.75 A14,14 0 0 1 367.75,688.0 V422.0 A56,56 0 0 1 423.75,366.0 Z" fill="#c9e2e2" stroke="#0a0a0a" stroke-width="6"/></svg>
<div class="a" style="left:38px;top:782px;width:941px;height:15px;background:#535353;"></div>
<div class="a" style="left:38px;top:782px;width:40px;height:15px;background:#4a4a4a;"></div>
<div class="t" style="left:40.5px;top:783.5px;font-size:10px;line-height:12px;color:#e2e2e2;;transform:scaleX(0.9728);transform-origin:0 0;">73.33%</div>
<div class="t" style="left:107.5px;top:783.5px;font-size:10px;line-height:12px;color:#e2e2e2;;transform:scaleX(0.9914);transform-origin:0 0;">文档:2.86M/0 字节</div>
<svg style="left:222px;top:785px;" width="6" height="10" viewBox="0 0 6 10"><path d="M1 1L5 5L1 9" fill="none" stroke="#d0d0d0" stroke-width="1.2"/></svg>
<div class="a" style="left:740px;top:156px;width:241px;height:311px;background:#2a2a2a;"></div>
<div class="a" style="left:741px;top:157px;width:239px;height:309px;background:#535353;"></div>
<div class="a" style="left:741px;top:157px;width:239px;height:25px;background:#474747;"></div>
<div class="a" style="left:741px;top:157px;width:37px;height:25px;background:#4a4a4a;"></div>
<div class="t" style="left:749.5px;top:166px;font-size:10px;line-height:12px;color:#a8a8a8;;transform:scaleX(1.0000);transform-origin:0 0;">调整</div>
<div class="a" style="left:778px;top:157px;width:35px;height:27px;background:#535353;"></div>
<div class="t" style="left:785px;top:166px;font-size:10px;line-height:12px;color:#e8e8e8;;transform:scaleX(1.0250);transform-origin:0 0;">属性</div>
<svg style="left:945px;top:168.5px;" width="10" height="8" viewBox="0 0 10 8"><path d="M1 0.8L3.8 3.5L1 6.2M5 0.8L7.8 3.5L5 6.2" fill="none" stroke="#ececec" stroke-width="1.4"/></svg>
<div class="a" style="left:959px;top:167px;width:1.2px;height:9px;background:#c8c8c8;"></div>
<svg style="left:966px;top:169px;" width="10" height="7" viewBox="0 0 10 7"><path d="M0 0.8H9M0 3.2H9M0 5.6H9" stroke="#c8c8c8" stroke-width="1.2"/></svg>
<div class="a" style="left:745px;top:184px;width:222px;height:28px;background:#4e4e4e;"></div>
<div class="a" style="left:751px;top:189px;width:17px;height:18px;background:#303030;"></div>
<svg style="left:751px;top:189px;" width="17" height="18" viewBox="0 0 17 18"><rect x="4" y="4.5" width="9" height="9" fill="none" stroke="#e6e6e6" stroke-width="1.4"/><circle cx="4" cy="4.5" r="1.8" fill="#e6e6e6"/><circle cx="13" cy="4.5" r="1.8" fill="#e6e6e6"/><circle cx="4" cy="13.5" r="1.8" fill="#e6e6e6"/><circle cx="13" cy="13.5" r="1.8" fill="#e6e6e6"/></svg>
<div class="a" style="left:774px;top:193px;width:14px;height:11px;background:#ececec;"></div>
<svg style="left:774px;top:193px;" width="14" height="11" viewBox="0 0 14 11"><circle cx="7" cy="5.5" r="3" fill="#555"/></svg>
<div class="t" style="left:794.2px;top:192px;font-size:11px;line-height:13px;color:#dcdcdc;;transform:scaleX(0.9242);transform-origin:0 0;">实时形状属性</div>
<div class="a" style="left:745px;top:213px;width:222px;height:1px;background:#474747;"></div>
<div class="a" style="left:966px;top:184px;width:13px;height:262px;background:#4d4d4d;"></div>
<div class="t" style="left:749.5px;top:224px;font-size:10.5px;line-height:12.5px;color:#d0d0d0;;transform:scaleX(0.8702);transform-origin:0 0;">W:</div>
<div class="a" style="left:767px;top:222px;width:45px;height:15px;background:#454545;"></div>
<div class="t" style="left:768.2px;top:224px;font-size:11px;line-height:13px;color:#e4e4e4;;transform:scaleX(0.8982);transform-origin:0 0;">67 像素</div>
<svg style="left:821.5px;top:225.5px;" width="14" height="9" viewBox="0 0 14 9"><path d="M5 1H3.2A2.7 2.7 0 0 0 3.2 6.8H5M8 1H9.8A2.7 2.7 0 0 1 9.8 6.8H8M4 3.9H9" fill="none" stroke="#d4d4d4" stroke-width="1.2"/></svg>
<div class="t" style="left:843.3px;top:224px;font-size:10.5px;line-height:12.5px;color:#d0d0d0;;transform:scaleX(0.9524);transform-origin:0 0;">H:</div>
<div class="a" style="left:860px;top:222px;width:44px;height:15px;background:#454545;"></div>
<div class="t" style="left:862.9px;top:224px;font-size:11px;line-height:13px;color:#e4e4e4;;transform:scaleX(0.8521);transform-origin:0 0;">122 像素</div>
<div class="t" style="left:752.5px;top:248px;font-size:10.5px;line-height:12.5px;color:#d0d0d0;;transform:scaleX(0.9575);transform-origin:0 0;">X:</div>
<div class="a" style="left:767px;top:246px;width:45px;height:15px;background:#454545;"></div>
<div class="t" style="left:768.9px;top:248px;font-size:11px;line-height:13px;color:#e4e4e4;;transform:scaleX(0.8721);transform-origin:0 0;">466.99 像</div>
<div class="t" style="left:845.3px;top:248px;font-size:10.5px;line-height:12.5px;color:#d0d0d0;;transform:scaleX(0.9632);transform-origin:0 0;">Y:</div>
<div class="a" style="left:860px;top:246px;width:44px;height:15px;background:#454545;"></div>
<div class="t" style="left:861.5px;top:248px;font-size:11px;line-height:13px;color:#e4e4e4;;transform:scaleX(0.8595);transform-origin:0 0;">161.99 像</div>
<div class="a" style="left:750px;top:274px;width:21px;height:12px;background:#f4f4f4;"></div>
<div class="a" style="left:779px;top:274px;width:20px;height:12px;background:#0a0a0a;"></div>
<svg style="left:779px;top:274px;" width="20" height="12" viewBox="0 0 20 12"><rect x="3.5" y="3.5" width="13" height="5" rx="1" fill="none" stroke="#eee" stroke-width="1.3"/></svg>
<div class="a" style="left:807px;top:273px;width:52px;height:14px;background:#454545;"></div>
<div class="t" style="left:808.1px;top:275px;font-size:11px;line-height:13px;color:#e4e4e4;;transform:scaleX(0.8580);transform-origin:0 0;">10 像素</div>
<div class="a" style="left:859px;top:273px;width:13px;height:14px;background:#484848;"></div>
<svg style="left:861px;top:278px;" width="9" height="6" viewBox="0 0 9 6"><path d="M1 1.5L4 4.5L7 1.5" fill="none" stroke="#c8c8c8" stroke-width="1.1"/></svg>
<div class="a" style="left:879px;top:273px;width:25px;height:14px;background:#454545;"></div>
<div class="a" style="left:881px;top:279px;width:13px;height:2px;background:#f0f0f0;"></div>
<svg style="left:894px;top:278px;" width="9" height="6" viewBox="0 0 9 6"><path d="M1 1.5L4 4.5L7 1.5" fill="none" stroke="#c8c8c8" stroke-width="1.1"/></svg>
<div class="a" style="left:751px;top:293px;width:49px;height:11px;background:#454545;"></div>
<svg style="left:790px;top:296px;" width="9" height="6" viewBox="0 0 9 6"><path d="M1 1.5L4 4.5L7 1.5" fill="none" stroke="#c8c8c8" stroke-width="1.1"/></svg>
<svg style="left:756px;top:293px;" width="11" height="11" viewBox="0 0 11 11"><rect x="2.5" y="2.5" width="6" height="6" fill="none" stroke="#eee" stroke-width="1.5"/><circle cx="2" cy="2" r="1.2" fill="#111"/><circle cx="9" cy="2" r="1.2" fill="#111"/><circle cx="2" cy="9" r="1.2" fill="#111"/><circle cx="9" cy="9" r="1.2" fill="#111"/></svg>
<div class="a" style="left:807px;top:293px;width:51px;height:11px;background:#454545;"></div>
<svg style="left:848px;top:296px;" width="9" height="6" viewBox="0 0 9 6"><path d="M1 1.5L4 4.5L7 1.5" fill="none" stroke="#c8c8c8" stroke-width="1.1"/></svg>
<svg style="left:812px;top:293px;" width="11" height="11" viewBox="0 0 11 11"><rect x="4" y="0.5" width="5" height="10" fill="#eee"/><rect x="1" y="4.5" width="4" height="2" fill="#111"/></svg>
<div class="a" style="left:864px;top:293px;width:40px;height:11px;background:#454545;"></div>
<svg style="left:894px;top:296px;" width="9" height="6" viewBox="0 0 9 6"><path d="M1 1.5L4 4.5L7 1.5" fill="none" stroke="#c8c8c8" stroke-width="1.1"/></svg>
<svg style="left:870px;top:293px;" width="11" height="11" viewBox="0 0 11 11"><rect x="0.5" y="0.5" width="10" height="10" fill="#eee"/><rect x="4" y="4" width="7" height="7" fill="#454545"/><rect x="3" y="3" width="2" height="2" fill="#111"/></svg>
<div class="a" style="left:765px;top:317px;width:139px;height:16px;background:#454545;"></div>
<div class="t" style="left:764.5px;top:320px;font-size:11px;line-height:13px;color:#e4e4e4;;transform:scaleX(0.9068);transform-origin:0 0;">0像素0像素0像素0像素</div>
<svg style="left:750px;top:340px;" width="13" height="13" viewBox="0 0 13 13"><path d="M1 12V4Q1 1 4 1H12V12Z" fill="none" stroke="#c8c8c8" stroke-width="1.1"/></svg>
<div class="a" style="left:769px;top:339px;width:55px;height:15px;background:#454545;"></div>
<div class="a" style="left:829px;top:339px;width:55px;height:15px;background:#454545;"></div>
<div class="t" style="left:770.5px;top:341px;font-size:11px;line-height:13px;color:#e4e4e4;;transform:scaleX(0.9138);transform-origin:0 0;">0 像素</div>
<div class="t" style="left:830.5px;top:341px;font-size:11px;line-height:13px;color:#e4e4e4;;transform:scaleX(0.9138);transform-origin:0 0;">0 像素</div>
<svg style="left:891px;top:340px;" width="13" height="13" viewBox="0 0 13 13"><path d="M1 1H9Q12 1 12 4V12H1Z" fill="none" stroke="#c8c8c8" stroke-width="1.1"/></svg>
<div class="a" style="left:816px;top:360px;width:20px;height:20px;background:#3e3e3e;"></div>
<svg style="left:819.5px;top:366px;" width="14" height="9" viewBox="0 0 14 9"><path d="M5 1H3.2A2.7 2.7 0 0 0 3.2 6.8H5M8 1H9.8A2.7 2.7 0 0 1 9.8 6.8H8M4 3.9H9" fill="none" stroke="#e0e0e0" stroke-width="1.2"/></svg>
<svg style="left:750px;top:388px;" width="13" height="13" viewBox="0 0 13 13"><path d="M1 1H12V12H4Q1 12 1 9Z" fill="none" stroke="#c8c8c8" stroke-width="1.1"/></svg>
<div class="a" style="left:769px;top:386px;width:55px;height:15px;background:#454545;"></div>
<div class="a" style="left:829px;top:386px;width:55px;height:15px;background:#454545;"></div>
<div class="t" style="left:770.5px;top:389px;font-size:11px;line-height:13px;color:#e4e4e4;;transform:scaleX(0.9138);transform-origin:0 0;">0 像素</div>
<div class="t" style="left:830.5px;top:389px;font-size:11px;line-height:13px;color:#e4e4e4;;transform:scaleX(0.9138);transform-origin:0 0;">0 像素</div>
<svg style="left:891px;top:388px;" width="13" height="13" viewBox="0 0 13 13"><path d="M1 1H12V9Q12 12 9 12H1Z" fill="none" stroke="#c8c8c8" stroke-width="1.1"/></svg>
<div class="a" style="left:772px;top:412px;width:26px;height:19px;background:#474747;"></div>
<div class="a" style="left:799px;top:412px;width:26px;height:19px;background:#474747;"></div>
<div class="a" style="left:827px;top:412px;width:26px;height:19px;background:#474747;"></div>
<div class="a" style="left:854px;top:412px;width:26px;height:19px;background:#474747;"></div>
<svg style="left:778px;top:414px;" width="15" height="14" viewBox="0 0 15 14"><rect x="2" y="1.5" width="8" height="8" fill="#f0f0f0"/><rect x="5" y="4.5" width="8" height="8" fill="#f0f0f0" stroke="#474747" stroke-width="0.8"/></svg>
<svg style="left:805px;top:414px;" width="15" height="14" viewBox="0 0 15 14"><rect x="2" y="1.5" width="8" height="8" fill="#f0f0f0"/><rect x="5" y="4.5" width="8" height="8" fill="#474747" stroke="#f0f0f0" stroke-width="1.1"/></svg>
<svg style="left:833px;top:414px;" width="15" height="14" viewBox="0 0 15 14"><rect x="2" y="1.5" width="8" height="8" fill="none" stroke="#f0f0f0" stroke-width="1.1"/><rect x="5" y="4.5" width="8" height="8" fill="none" stroke="#f0f0f0" stroke-width="1.1"/><rect x="5" y="4.5" width="5" height="5" fill="#f0f0f0"/></svg>
<svg style="left:860px;top:414px;" width="15" height="14" viewBox="0 0 15 14"><rect x="2" y="1.5" width="8" height="8" fill="#f0f0f0"/><rect x="5" y="4.5" width="8" height="8" fill="#f0f0f0"/><rect x="5.5" y="5" width="4" height="4" fill="#474747"/></svg>
<div class="a" style="left:741px;top:466px;width:239px;height:6px;background:#4d4d4d;"></div>
<div class="a" style="left:741px;top:466px;width:239px;height:1px;background:#3c3c3c;"></div>
<div class="a" style="left:979px;top:57px;width:3px;height:740px;background:#3a3a3a;"></div>
<div class="a" style="left:982px;top:57px;width:31px;height:740px;background:#535353;"></div>
<div class="a" style="left:982px;top:57px;width:1px;height:740px;background:#5c5c5c;"></div>
<div class="a" style="left:1013px;top:57px;width:3px;height:740px;background:#3c3c3c;"></div>
<div class="a" style="left:982px;top:57px;width:270px;height:10px;background:#454545;"></div>
<div class="a" style="left:1013px;top:57px;width:3px;height:10px;background:#454545;"></div>
<svg style="left:1000px;top:59px;" width="9" height="6" viewBox="0 0 9 6"><path d="M4 1L1.5 3L4 5M8 1L5.5 3L8 5" fill="none" stroke="#e8e8e8" stroke-width="1.3"/></svg>
<svg style="left:1239px;top:59px;" width="9" height="6" viewBox="0 0 9 6"><path d="M1 1L3.5 3L1 5M5 1L7.5 3L5 5" fill="none" stroke="#e8e8e8" stroke-width="1.3"/></svg>
<svg style="left:0px;top:0px;" width="1" height="1" viewBox="0 0 1 1"><rect x="992" y="80.5" width="3.5" height="3.5" fill="none" stroke="#e6e6e6" stroke-width="1.1"/><rect x="992" y="86" width="3.5" height="3.5" fill="none" stroke="#e6e6e6" stroke-width="1.1"/><rect x="991.5" y="91" width="4.5" height="4.5" fill="#e6e6e6"/><path d="M999.5 82.5C1003.5 84 1003.5 89 1000 93" fill="none" stroke="#e6e6e6" stroke-width="1.3"/><path d="M998.5 81L1001.5 81.5L999 84.5Z" fill="#e6e6e6"/><rect x="983" y="101" width="29" height="1" fill="#474747"/><path d="M986 114H988M989.5 114H994M986 117H988M989.5 117H994M986 120H988M989.5 120H994" stroke="#e6e6e6" stroke-width="1.2"/><path d="M1006.5 112.5L998.5 121.5" stroke="#e6e6e6" stroke-width="2.3" stroke-linecap="round"/><path d="M998.5 120.5C994.5 121 993 126 992.5 128.5C996 128 1000 126 999.8 122Z" fill="#e6e6e6"/><path d="M995 141.5H1006M988 147.5H997" stroke="#e6e6e6" stroke-width="1.6"/><path d="M988.5 141C990 138.5 994 138.5 996 141.5C994 143.5 990 143.5 988.5 141Z" fill="#e6e6e6"/><path d="M997 147.5L1006.5 143.5V151.5Z" fill="#e6e6e6"/><rect x="983" y="160" width="29" height="1" fill="#474747"/><circle cx="997.1" cy="179.3" r="5.7" fill="none" stroke="#e6e6e6" stroke-width="1.3"/><path d="M1001.1 175.3L993.1 183.3A5.7 5.7 0 0 0 1001.1 175.3Z" fill="#e6e6e6"/></svg>
<div class="a" style="left:985px;top:194px;width:23px;height:17px;background:#2a2a2a;border:1px solid #3c3c3c"></div>
<svg style="left:0px;top:0px;" width="1" height="1" viewBox="0 0 1 1"><circle cx="995" cy="200" r="3.8" fill="none" stroke="#e6e6e6" stroke-width="1.1"/><path d="M993 199L995 198L997 199V201.5L995 202.5L993 201.5Z" fill="#e6e6e6"/><rect x="1000.5" y="196.5" width="3.5" height="3" fill="#e6e6e6"/><rect x="1000.5" y="200.5" width="3.5" height="3" fill="#e6e6e6"/><rect x="991" y="205.5" width="13" height="2.5" fill="#e6e6e6"/><rect x="983" y="218" width="29" height="1" fill="#474747"/><rect x="991.5" y="230" width="12" height="12" fill="none" stroke="#e6e6e6" stroke-width="1.2"/><path d="M995.5 230V242M999.5 230V242M991.5 234H1003.5M991.5 238H1003.5" stroke="#e6e6e6" stroke-width="1"/><rect x="983" y="251" width="29" height="1" fill="#474747"/><path d="M990.5 272C989.5 267 995.5 264.5 1001 266C1006 267.5 1005.5 271.5 1002 271.5C999 271.5 1000.5 275.5 997.5 276.5C994 277.5 991 276 990.5 272Z" fill="#e6e6e6"/><circle cx="994" cy="270.5" r="1.1" fill="#535353"/><circle cx="997.5" cy="268" r="1.1" fill="#535353"/><circle cx="1001.5" cy="268.5" r="1.1" fill="#535353"/><circle cx="994.5" cy="274" r="1.1" fill="#535353"/><rect x="983" y="284" width="29" height="1" fill="#474747"/></svg>
<div class="a" style="left:1016px;top:67px;width:236px;height:730px;background:#535353;"></div>
<div class="a" style="left:1016px;top:67px;width:236px;height:23px;background:#474747;"></div>
<div class="a" style="left:1016px;top:67px;width:33px;height:24px;background:#535353;"></div>
<div class="t" style="left:1022.5px;top:73.5px;font-size:10.5px;line-height:12.5px;color:#e8e8e8;;transform:scaleX(0.8636);transform-origin:0 0;">图层</div>
<div class="t" style="left:1056.5px;top:73.5px;font-size:10.5px;line-height:12.5px;color:#b4b4b4;;transform:scaleX(0.9091);transform-origin:0 0;">通道</div>
<div class="t" style="left:1093.5px;top:73.5px;font-size:10.5px;line-height:12.5px;color:#b4b4b4;;transform:scaleX(0.8636);transform-origin:0 0;">路径</div>
<svg style="left:1237px;top:76px;" width="11" height="8" viewBox="0 0 11 8"><path d="M0 1H10M0 4H10M0 7H10" stroke="#bdbdbd" stroke-width="1.2"/></svg>
<div class="a" style="left:1019px;top:98px;width:70px;height:18px;background:#454545;"></div>
<svg style="left:1024px;top:102px;" width="10" height="10" viewBox="0 0 10 10"><circle cx="4" cy="4" r="3" fill="none" stroke="#eee" stroke-width="1.5"/><path d="M6.5 6.5L9 9" stroke="#eee" stroke-width="1.7"/></svg>
<div class="t" style="left:1036px;top:102px;font-size:11px;line-height:13px;color:#e8e8e8;;transform:scaleX(0.9318);transform-origin:0 0;">类型</div>
<svg style="left:1079px;top:104px;" width="9" height="6" viewBox="0 0 9 6"><path d="M1 1.5L4 4.5L7 1.5" fill="none" stroke="#c8c8c8" stroke-width="1.1"/></svg>
<svg style="left:0px;top:0px;" width="1" height="1" viewBox="0 0 1 1"><rect x="1103.2" y="102.3" width="9.5" height="8.2" fill="none" stroke="#e6e6e6" stroke-width="1.3"/><path d="M1104.5 109.5L1106.5 106.5L1108 108L1109 107L1111 109.5Z" fill="#e6e6e6"/><circle cx="1128.4" cy="107.2" r="4.3" fill="none" stroke="#e6e6e6" stroke-width="1.3"/><path d="M1131.4 104.2L1125.4 110.2A4.3 4.3 0 0 0 1131.4 104.2Z" fill="#e6e6e6"/><path d="M1144.5 103.5H1153M1148.75 103.5V110.5M1146.5 110.8H1151M1144.5 103V105.5M1153 103V105.5" stroke="#e6e6e6" stroke-width="1.7"/><rect x="1165.2" y="103.5" width="7.2" height="6.8" fill="none" stroke="#e6e6e6" stroke-width="1.2"/><rect x="1164" y="102.3" width="2.6" height="2.6" fill="#e6e6e6"/><rect x="1171" y="102.3" width="2.6" height="2.6" fill="#e6e6e6"/><rect x="1164" y="109" width="2.6" height="2.6" fill="#e6e6e6"/><rect x="1171" y="109" width="2.6" height="2.6" fill="#e6e6e6"/><path d="M1187.5 102.5H1191L1193.3 104.8V111H1187.5Z" fill="none" stroke="#e6e6e6" stroke-width="1.1"/><rect x="1185.2" y="106.8" width="4.6" height="4.6" fill="#e6e6e6"/><circle cx="1210.7" cy="103" r="3.2" fill="#eeeeee"/><rect x="1209" y="106.5" width="3.4" height="5" fill="#3a3a3a"/></svg>
<div class="a" style="left:1019px;top:119px;width:230px;height:1px;background:#474747;"></div>
<div class="a" style="left:1018px;top:123px;width:96px;height:17px;background:#454545;"></div>
<div class="t" style="left:1024.2px;top:126.5px;font-size:11px;line-height:13px;color:#e8e8e8;;transform:scaleX(0.9318);transform-origin:0 0;">正常</div>
<svg style="left:1102px;top:129px;" width="9" height="6" viewBox="0 0 9 6"><path d="M1 1.5L4 4.5L7 1.5" fill="none" stroke="#c8c8c8" stroke-width="1.1"/></svg>
<div class="t" style="left:1120.2px;top:126.5px;font-size:11px;line-height:13px;color:#d8d8d8;;transform:scaleX(0.9668);transform-origin:0 0;">不透明度:</div>
<div class="a" style="left:1169px;top:123px;width:32px;height:17px;background:#454545;"></div>
<div class="t" style="left:1171.5px;top:126.5px;font-size:11px;line-height:13px;color:#e8e8e8;;transform:scaleX(0.8884);transform-origin:0 0;">100%</div>
<div class="a" style="left:1202px;top:123px;width:11px;height:17px;background:#4a4a4a;"></div>
<svg style="left:1203px;top:129px;" width="9" height="6" viewBox="0 0 9 6"><path d="M1 1.5L4 4.5L7 1.5" fill="none" stroke="#c8c8c8" stroke-width="1.1"/></svg>
<div class="t" style="left:1019.3px;top:150px;font-size:11px;line-height:13px;color:#d8d8d8;;transform:scaleX(1.0175);transform-origin:0 0;">锁定:</div>
<svg style="left:0px;top:0px;" width="1" height="1" viewBox="0 0 1 1"><g fill="#bdbdbd"><rect x="1051" y="149" width="3" height="3"/><rect x="1057" y="149" width="3" height="3"/><rect x="1054" y="152" width="3" height="3"/><rect x="1051" y="155" width="3" height="3"/><rect x="1057" y="155" width="3" height="3"/></g><rect x="1051" y="149" width="9" height="9" fill="none" stroke="#8a8a8a" stroke-width="0.8"/><path d="M1079 149.5L1073.5 156" stroke="#9c9c9c" stroke-width="1.8" stroke-linecap="round"/><path d="M1073.8 155.3C1071 156 1070 159.5 1069.2 161C1072 160.7 1074.5 159 1074.7 156.5Z" fill="#9c9c9c"/><g transform="translate(1093,154) scale(0.85)"><path d="M0 -6.5V6.5M-6.5 0H6.5" stroke="#eeeeee" stroke-width="1.6"/><path d="M0 -7.5L-2.6 -4.2H2.6Z M0 7.5L-2.6 4.2H2.6Z M-7.5 0L-4.2 -2.6V2.6Z M7.5 0L4.2 -2.6V2.6Z" fill="#eeeeee"/></g><path d="M1108 149V158H1117M1105 152H1114V161" fill="none" stroke="#e6e6e6" stroke-width="1.2"/><path d="M1112 148L1118 154" stroke="#e6e6e6" stroke-width="0.8" stroke-dasharray="1 1"/><path d="M1127.6 154V152.5A2.4 2.4 0 0 1 1132.4 152.5V154" fill="none" stroke="#e6e6e6" stroke-width="1.4"/><rect x="1125.8" y="154" width="8.4" height="6.5" fill="#e6e6e6"/><rect x="1129.4" y="156" width="1.2" height="2.2" fill="#535353"/></svg>
<div class="t" style="left:1140.3px;top:150px;font-size:11px;line-height:13px;color:#d8d8d8;;transform:scaleX(0.9975);transform-origin:0 0;">填充:</div>
<div class="a" style="left:1169px;top:146px;width:32px;height:17px;background:#454545;"></div>
<div class="t" style="left:1171.5px;top:150px;font-size:11px;line-height:13px;color:#e8e8e8;;transform:scaleX(0.8884);transform-origin:0 0;">100%</div>
<div class="a" style="left:1202px;top:146px;width:11px;height:17px;background:#4a4a4a;"></div>
<svg style="left:1203px;top:152px;" width="9" height="6" viewBox="0 0 9 6"><path d="M1 1.5L4 4.5L7 1.5" fill="none" stroke="#c8c8c8" stroke-width="1.1"/></svg>
<div class="a" style="left:1016px;top:167px;width:223px;height:608px;background:#4d4d4d;"></div>
<div class="a" style="left:1016px;top:167.5px;width:223px;height:34.2px;background:#535353;"></div>
<div class="a" style="left:1016px;top:200.7px;width:223px;height:1px;background:#424242;"></div>
<svg style="left:1021px;top:182.0px;" width="13" height="9" viewBox="0 0 13 9"><path d="M0.5 4.5C3 0.5 10 0.5 12.5 4.5C10 8.5 3 8.5 0.5 4.5Z" fill="#ececec"/><circle cx="6.5" cy="4.5" r="2.3" fill="#5a5a5a"/><circle cx="6.3" cy="4.3" r="0.9" fill="#dcdcdc"/></svg>
<div class="a" style="left:1043px;top:172px;width:27px;height:27px;background:#2e2e2e;"></div>
<svg style="left:1044px;top:173px;" width="26" height="25" viewBox="0 0 26 25"><rect x="0" y="0" width="25" height="25" fill="#fbfbfb"/><rect x="0" y="0" width="3" height="3" fill="#e6e6e6"/><rect x="0" y="6" width="3" height="3" fill="#e6e6e6"/><rect x="0" y="12" width="3" height="3" fill="#e6e6e6"/><rect x="0" y="18" width="3" height="3" fill="#e6e6e6"/><rect x="0" y="24" width="3" height="1" fill="#e6e6e6"/><rect x="3" y="3" width="3" height="3" fill="#e6e6e6"/><rect x="3" y="9" width="3" height="3" fill="#e6e6e6"/><rect x="3" y="15" width="3" height="3" fill="#e6e6e6"/><rect x="3" y="21" width="3" height="3" fill="#e6e6e6"/><rect x="6" y="0" width="3" height="3" fill="#e6e6e6"/><rect x="6" y="6" width="3" height="3" fill="#e6e6e6"/><rect x="6" y="12" width="3" height="3" fill="#e6e6e6"/><rect x="6" y="18" width="3" height="3" fill="#e6e6e6"/><rect x="6" y="24" width="3" height="1" fill="#e6e6e6"/><rect x="9" y="3" width="3" height="3" fill="#e6e6e6"/><rect x="9" y="9" width="3" height="3" fill="#e6e6e6"/><rect x="9" y="15" width="3" height="3" fill="#e6e6e6"/><rect x="9" y="21" width="3" height="3" fill="#e6e6e6"/><rect x="12" y="0" width="3" height="3" fill="#e6e6e6"/><rect x="12" y="6" width="3" height="3" fill="#e6e6e6"/><rect x="12" y="12" width="3" height="3" fill="#e6e6e6"/><rect x="12" y="18" width="3" height="3" fill="#e6e6e6"/><rect x="12" y="24" width="3" height="1" fill="#e6e6e6"/><rect x="15" y="3" width="3" height="3" fill="#e6e6e6"/><rect x="15" y="9" width="3" height="3" fill="#e6e6e6"/><rect x="15" y="15" width="3" height="3" fill="#e6e6e6"/><rect x="15" y="21" width="3" height="3" fill="#e6e6e6"/><rect x="18" y="0" width="3" height="3" fill="#e6e6e6"/><rect x="18" y="6" width="3" height="3" fill="#e6e6e6"/><rect x="18" y="12" width="3" height="3" fill="#e6e6e6"/><rect x="18" y="18" width="3" height="3" fill="#e6e6e6"/><rect x="18" y="24" width="3" height="1" fill="#e6e6e6"/><rect x="21" y="3" width="3" height="3" fill="#e6e6e6"/><rect x="21" y="9" width="3" height="3" fill="#e6e6e6"/><rect x="21" y="15" width="3" height="3" fill="#e6e6e6"/><rect x="21" y="21" width="3" height="3" fill="#e6e6e6"/><rect x="24" y="0" width="1" height="3" fill="#e6e6e6"/><rect x="24" y="6" width="1" height="3" fill="#e6e6e6"/><rect x="24" y="12" width="1" height="3" fill="#e6e6e6"/><rect x="24" y="18" width="1" height="3" fill="#e6e6e6"/><rect x="24" y="24" width="1" height="1" fill="#e6e6e6"/><rect x="4" y="13" width="14" height="12" fill="#c9e2e2"/><rect x="9" y="10.5" width="9" height="1.3" fill="#2a2a2a"/><rect x="13.5" y="14.5" width="12" height="10.5" fill="#3a3a3a"/><rect x="16" y="17" width="7" height="6" fill="#4a4a4a" stroke="#e8e8e8" stroke-width="1.3"/></svg>
<div class="t" style="left:1076.5px;top:181.2px;font-size:10.5px;line-height:12.5px;color:#e8e8e8;;transform:scaleX(0.8864);transform-origin:0 0;">瓶身</div>
<div class="a" style="left:1016px;top:201.7px;width:223px;height:34.2px;background:#535353;"></div>
<div class="a" style="left:1016px;top:234.89999999999998px;width:223px;height:1px;background:#424242;"></div>
<svg style="left:1021px;top:216.2px;" width="13" height="9" viewBox="0 0 13 9"><path d="M0.5 4.5C3 0.5 10 0.5 12.5 4.5C10 8.5 3 8.5 0.5 4.5Z" fill="#ececec"/><circle cx="6.5" cy="4.5" r="2.3" fill="#5a5a5a"/><circle cx="6.3" cy="4.3" r="0.9" fill="#dcdcdc"/></svg>
<div class="a" style="left:1043px;top:206px;width:27px;height:27px;background:#2e2e2e;"></div>
<svg style="left:1044px;top:207px;" width="26" height="25" viewBox="0 0 26 25"><rect x="0" y="0" width="25" height="25" fill="#fbfbfb"/><rect x="0" y="0" width="3" height="3" fill="#e6e6e6"/><rect x="0" y="6" width="3" height="3" fill="#e6e6e6"/><rect x="0" y="12" width="3" height="3" fill="#e6e6e6"/><rect x="0" y="18" width="3" height="3" fill="#e6e6e6"/><rect x="0" y="24" width="3" height="1" fill="#e6e6e6"/><rect x="3" y="3" width="3" height="3" fill="#e6e6e6"/><rect x="3" y="9" width="3" height="3" fill="#e6e6e6"/><rect x="3" y="15" width="3" height="3" fill="#e6e6e6"/><rect x="3" y="21" width="3" height="3" fill="#e6e6e6"/><rect x="6" y="0" width="3" height="3" fill="#e6e6e6"/><rect x="6" y="6" width="3" height="3" fill="#e6e6e6"/><rect x="6" y="12" width="3" height="3" fill="#e6e6e6"/><rect x="6" y="18" width="3" height="3" fill="#e6e6e6"/><rect x="6" y="24" width="3" height="1" fill="#e6e6e6"/><rect x="9" y="3" width="3" height="3" fill="#e6e6e6"/><rect x="9" y="9" width="3" height="3" fill="#e6e6e6"/><rect x="9" y="15" width="3" height="3" fill="#e6e6e6"/><rect x="9" y="21" width="3" height="3" fill="#e6e6e6"/><rect x="12" y="0" width="3" height="3" fill="#e6e6e6"/><rect x="12" y="6" width="3" height="3" fill="#e6e6e6"/><rect x="12" y="12" width="3" height="3" fill="#e6e6e6"/><rect x="12" y="18" width="3" height="3" fill="#e6e6e6"/><rect x="12" y="24" width="3" height="1" fill="#e6e6e6"/><rect x="15" y="3" width="3" height="3" fill="#e6e6e6"/><rect x="15" y="9" width="3" height="3" fill="#e6e6e6"/><rect x="15" y="15" width="3" height="3" fill="#e6e6e6"/><rect x="15" y="21" width="3" height="3" fill="#e6e6e6"/><rect x="18" y="0" width="3" height="3" fill="#e6e6e6"/><rect x="18" y="6" width="3" height="3" fill="#e6e6e6"/><rect x="18" y="12" width="3" height="3" fill="#e6e6e6"/><rect x="18" y="18" width="3" height="3" fill="#e6e6e6"/><rect x="18" y="24" width="3" height="1" fill="#e6e6e6"/><rect x="21" y="3" width="3" height="3" fill="#e6e6e6"/><rect x="21" y="9" width="3" height="3" fill="#e6e6e6"/><rect x="21" y="15" width="3" height="3" fill="#e6e6e6"/><rect x="21" y="21" width="3" height="3" fill="#e6e6e6"/><rect x="24" y="0" width="1" height="3" fill="#e6e6e6"/><rect x="24" y="6" width="1" height="3" fill="#e6e6e6"/><rect x="24" y="12" width="1" height="3" fill="#e6e6e6"/><rect x="24" y="18" width="1" height="3" fill="#e6e6e6"/><rect x="24" y="24" width="1" height="1" fill="#e6e6e6"/><rect x="13.5" y="14.5" width="12" height="10.5" fill="#3a3a3a"/><rect x="16" y="17" width="7" height="6" fill="#4a4a4a" stroke="#e8e8e8" stroke-width="1.3"/></svg>
<div class="t" style="left:1076.5px;top:215.39999999999998px;font-size:10.5px;line-height:12.5px;color:#e8e8e8;;transform:scaleX(0.8864);transform-origin:0 0;">盖子</div>
<div class="a" style="left:1016px;top:235.9px;width:223px;height:34.2px;background:#535353;"></div>
<div class="a" style="left:1016px;top:269.1px;width:223px;height:1px;background:#424242;"></div>
<svg style="left:1021px;top:250.4px;" width="13" height="9" viewBox="0 0 13 9"><path d="M0.5 4.5C3 0.5 10 0.5 12.5 4.5C10 8.5 3 8.5 0.5 4.5Z" fill="#ececec"/><circle cx="6.5" cy="4.5" r="2.3" fill="#5a5a5a"/><circle cx="6.3" cy="4.3" r="0.9" fill="#dcdcdc"/></svg>
<div class="a" style="left:1043px;top:240px;width:27px;height:27px;background:#2e2e2e;"></div>
<svg style="left:1044px;top:241px;" width="26" height="25" viewBox="0 0 26 25"><rect x="0" y="0" width="25" height="25" fill="#fbfbfb"/><rect x="0" y="0" width="3" height="3" fill="#e6e6e6"/><rect x="0" y="6" width="3" height="3" fill="#e6e6e6"/><rect x="0" y="12" width="3" height="3" fill="#e6e6e6"/><rect x="0" y="18" width="3" height="3" fill="#e6e6e6"/><rect x="0" y="24" width="3" height="1" fill="#e6e6e6"/><rect x="3" y="3" width="3" height="3" fill="#e6e6e6"/><rect x="3" y="9" width="3" height="3" fill="#e6e6e6"/><rect x="3" y="15" width="3" height="3" fill="#e6e6e6"/><rect x="3" y="21" width="3" height="3" fill="#e6e6e6"/><rect x="6" y="0" width="3" height="3" fill="#e6e6e6"/><rect x="6" y="6" width="3" height="3" fill="#e6e6e6"/><rect x="6" y="12" width="3" height="3" fill="#e6e6e6"/><rect x="6" y="18" width="3" height="3" fill="#e6e6e6"/><rect x="6" y="24" width="3" height="1" fill="#e6e6e6"/><rect x="9" y="3" width="3" height="3" fill="#e6e6e6"/><rect x="9" y="9" width="3" height="3" fill="#e6e6e6"/><rect x="9" y="15" width="3" height="3" fill="#e6e6e6"/><rect x="9" y="21" width="3" height="3" fill="#e6e6e6"/><rect x="12" y="0" width="3" height="3" fill="#e6e6e6"/><rect x="12" y="6" width="3" height="3" fill="#e6e6e6"/><rect x="12" y="12" width="3" height="3" fill="#e6e6e6"/><rect x="12" y="18" width="3" height="3" fill="#e6e6e6"/><rect x="12" y="24" width="3" height="1" fill="#e6e6e6"/><rect x="15" y="3" width="3" height="3" fill="#e6e6e6"/><rect x="15" y="9" width="3" height="3" fill="#e6e6e6"/><rect x="15" y="15" width="3" height="3" fill="#e6e6e6"/><rect x="15" y="21" width="3" height="3" fill="#e6e6e6"/><rect x="18" y="0" width="3" height="3" fill="#e6e6e6"/><rect x="18" y="6" width="3" height="3" fill="#e6e6e6"/><rect x="18" y="12" width="3" height="3" fill="#e6e6e6"/><rect x="18" y="18" width="3" height="3" fill="#e6e6e6"/><rect x="18" y="24" width="3" height="1" fill="#e6e6e6"/><rect x="21" y="3" width="3" height="3" fill="#e6e6e6"/><rect x="21" y="9" width="3" height="3" fill="#e6e6e6"/><rect x="21" y="15" width="3" height="3" fill="#e6e6e6"/><rect x="21" y="21" width="3" height="3" fill="#e6e6e6"/><rect x="24" y="0" width="1" height="3" fill="#e6e6e6"/><rect x="24" y="6" width="1" height="3" fill="#e6e6e6"/><rect x="24" y="12" width="1" height="3" fill="#e6e6e6"/><rect x="24" y="18" width="1" height="3" fill="#e6e6e6"/><rect x="24" y="24" width="1" height="1" fill="#e6e6e6"/><rect x="9" y="6.5" width="4" height="1" fill="#555"/><rect x="13.5" y="14.5" width="12" height="10.5" fill="#3a3a3a"/><rect x="16" y="17" width="7" height="6" fill="#4a4a4a" stroke="#e8e8e8" stroke-width="1.3"/></svg>
<div class="t" style="left:1076.5px;top:249.6px;font-size:10.5px;line-height:12.5px;color:#e8e8e8;;transform:scaleX(0.8864);transform-origin:0 0;">卡口</div>
<div class="a" style="left:1016px;top:270.1px;width:223px;height:34.2px;background:#696969;"></div>
<div class="a" style="left:1016px;top:303.3px;width:223px;height:1px;background:#424242;"></div>
<svg style="left:1021px;top:284.6px;" width="13" height="9" viewBox="0 0 13 9"><path d="M0.5 4.5C3 0.5 10 0.5 12.5 4.5C10 8.5 3 8.5 0.5 4.5Z" fill="#ececec"/><circle cx="6.5" cy="4.5" r="2.3" fill="#5a5a5a"/><circle cx="6.3" cy="4.3" r="0.9" fill="#dcdcdc"/></svg>
<div class="a" style="left:1043px;top:275px;width:27px;height:27px;background:#2e2e2e;"></div>
<svg style="left:1044px;top:276px;" width="26" height="25" viewBox="0 0 26 25"><rect x="0" y="0" width="25" height="25" fill="#fbfbfb"/><rect x="0" y="0" width="3" height="3" fill="#e6e6e6"/><rect x="0" y="6" width="3" height="3" fill="#e6e6e6"/><rect x="0" y="12" width="3" height="3" fill="#e6e6e6"/><rect x="0" y="18" width="3" height="3" fill="#e6e6e6"/><rect x="0" y="24" width="3" height="1" fill="#e6e6e6"/><rect x="3" y="3" width="3" height="3" fill="#e6e6e6"/><rect x="3" y="9" width="3" height="3" fill="#e6e6e6"/><rect x="3" y="15" width="3" height="3" fill="#e6e6e6"/><rect x="3" y="21" width="3" height="3" fill="#e6e6e6"/><rect x="6" y="0" width="3" height="3" fill="#e6e6e6"/><rect x="6" y="6" width="3" height="3" fill="#e6e6e6"/><rect x="6" y="12" width="3" height="3" fill="#e6e6e6"/><rect x="6" y="18" width="3" height="3" fill="#e6e6e6"/><rect x="6" y="24" width="3" height="1" fill="#e6e6e6"/><rect x="9" y="3" width="3" height="3" fill="#e6e6e6"/><rect x="9" y="9" width="3" height="3" fill="#e6e6e6"/><rect x="9" y="15" width="3" height="3" fill="#e6e6e6"/><rect x="9" y="21" width="3" height="3" fill="#e6e6e6"/><rect x="12" y="0" width="3" height="3" fill="#e6e6e6"/><rect x="12" y="6" width="3" height="3" fill="#e6e6e6"/><rect x="12" y="12" width="3" height="3" fill="#e6e6e6"/><rect x="12" y="18" width="3" height="3" fill="#e6e6e6"/><rect x="12" y="24" width="3" height="1" fill="#e6e6e6"/><rect x="15" y="3" width="3" height="3" fill="#e6e6e6"/><rect x="15" y="9" width="3" height="3" fill="#e6e6e6"/><rect x="15" y="15" width="3" height="3" fill="#e6e6e6"/><rect x="15" y="21" width="3" height="3" fill="#e6e6e6"/><rect x="18" y="0" width="3" height="3" fill="#e6e6e6"/><rect x="18" y="6" width="3" height="3" fill="#e6e6e6"/><rect x="18" y="12" width="3" height="3" fill="#e6e6e6"/><rect x="18" y="18" width="3" height="3" fill="#e6e6e6"/><rect x="18" y="24" width="3" height="1" fill="#e6e6e6"/><rect x="21" y="3" width="3" height="3" fill="#e6e6e6"/><rect x="21" y="9" width="3" height="3" fill="#e6e6e6"/><rect x="21" y="15" width="3" height="3" fill="#e6e6e6"/><rect x="21" y="21" width="3" height="3" fill="#e6e6e6"/><rect x="24" y="0" width="1" height="3" fill="#e6e6e6"/><rect x="24" y="6" width="1" height="3" fill="#e6e6e6"/><rect x="24" y="12" width="1" height="3" fill="#e6e6e6"/><rect x="24" y="18" width="1" height="3" fill="#e6e6e6"/><rect x="24" y="24" width="1" height="1" fill="#e6e6e6"/><rect x="13.5" y="14.5" width="12" height="10.5" fill="#3a3a3a"/><rect x="16" y="17" width="7" height="6" fill="#4a4a4a" stroke="#e8e8e8" stroke-width="1.3"/></svg>
<svg style="left:1041px;top:273px;" width="32" height="31" viewBox="0 0 32 31"><path d="M0.5 5V0.5H5M27 0.5H31.5V5M31.5 26V30.5H27M5 30.5H0.5V26" fill="none" stroke="#ececec" stroke-width="1.3"/></svg>
<div class="t" style="left:1076.5px;top:283.8px;font-size:10.5px;line-height:12.5px;color:#e8e8e8;;transform:scaleX(0.8864);transform-origin:0 0;">吸管</div>
<div class="a" style="left:1016px;top:304.3px;width:223px;height:34.2px;background:#535353;"></div>
<div class="a" style="left:1016px;top:337.5px;width:223px;height:1px;background:#424242;"></div>
<svg style="left:1021px;top:318.8px;" width="13" height="9" viewBox="0 0 13 9"><path d="M0.5 4.5C3 0.5 10 0.5 12.5 4.5C10 8.5 3 8.5 0.5 4.5Z" fill="#ececec"/><circle cx="6.5" cy="4.5" r="2.3" fill="#5a5a5a"/><circle cx="6.3" cy="4.3" r="0.9" fill="#dcdcdc"/></svg>
<div class="a" style="left:1043px;top:309px;width:27px;height:27px;background:#3a3a3a;"></div>
<div class="a" style="left:1044px;top:310px;width:25px;height:25px;background:#d3d3d3;"></div>
<div class="t" style="left:1076.5px;top:318.0px;font-size:10.5px;line-height:12.5px;color:#e8e8e8;;transform:scaleX(0.8864);transform-origin:0 0;">背景</div>
<svg style="left:1216px;top:317.8px;" width="10" height="11" viewBox="0 0 10 11"><path d="M2.5 5V3.5A2.5 2.5 0 0 1 7.5 3.5V5" fill="none" stroke="#dcdcdc" stroke-width="1.2"/><rect x="1" y="5" width="8" height="6" fill="none" stroke="#dcdcdc" stroke-width="1.2"/><rect x="4.3" y="7.3" width="1.4" height="1.4" fill="#dcdcdc"/></svg>
<div class="a" style="left:1239px;top:167px;width:13px;height:608px;background:#4e4e4e;"></div>
<div class="a" style="left:1251px;top:57px;width:1px;height:740px;background:#5a5a5a;"></div>
<div class="a" style="left:1016px;top:775px;width:236px;height:21px;background:#535353;"></div>
<svg style="left:0px;top:0px;" width="1" height="1" viewBox="0 0 1 1"><rect x="1083.5" y="783" width="6" height="4.5" rx="2.2" fill="none" stroke="#8a8a8a" stroke-width="1.1"/><rect x="1087.5" y="783" width="6" height="4.5" rx="2.2" fill="none" stroke="#8a8a8a" stroke-width="1.1"/><rect x="1128" y="781.5" width="11" height="8" fill="#e6e6e6"/><circle cx="1133.5" cy="785.5" r="2.6" fill="#535353"/><circle cx="1156.5" cy="785.5" r="4.2" fill="none" stroke="#e6e6e6" stroke-width="1.2"/><path d="M1159.5 782.5L1153.5 788.5A4.2 4.2 0 0 0 1159.5 782.5Z" fill="#e6e6e6"/><rect x="1160" y="789.5" width="1.2" height="1.2" fill="#e6e6e6"/><path d="M1174 781.5H1178L1179 782.8H1184.5V790H1174Z" fill="#e6e6e6"/><path d="M1196.5 781.5H1205.5V790.5H1199.5L1196.5 787.5Z" fill="none" stroke="#e6e6e6" stroke-width="1.1"/><rect x="1196.5" y="785.5" width="3.5" height="3.5" fill="#e6e6e6"/><rect x="1220.5" y="782.5" width="7" height="8" fill="none" stroke="#e6e6e6" stroke-width="1.1"/><path d="M1219 782H1229M1222.5 780.5H1225.5M1222.8 784.5V789M1225.2 784.5V789" stroke="#e6e6e6" stroke-width="1"/></svg>
<div class="t" style="left:1107px;top:779px;font-size:11px;line-height:13px;color:#e6e6e6;font-style:italic;-webkit-text-stroke-width:0">fx</div>
<div class="a" style="left:1116px;top:790px;width:1.5px;height:1.5px;background:#e6e6e6"></div>
<div class="a" style="left:1252px;top:57px;width:4px;height:743px;background:#262626;"></div>
<div class="t" style="left:841.5px;top:749.5px;font-size:29px;line-height:31px;color:#ffffff;-webkit-text-stroke-width:0;transform:scaleX(1.0345);transform-origin:0 0;">百家号</div>
<svg style="left:934px;top:751px;" width="20" height="29" viewBox="0 0 20 29"><path d="M2 28L17 2" stroke="#ffffff" stroke-width="2"/></svg>
<div class="t" style="left:952px;top:749.5px;font-size:29px;line-height:31px;color:#ffffff;-webkit-text-stroke-width:0;transform:scaleX(1.0172);transform-origin:0 0;">会</div>
<div class="t" style="left:982px;top:745.5px;font-size:37px;line-height:39px;color:#ffffff;-webkit-text-stroke-width:0;transform:scaleX(0.645);transform-origin:0 0;">PS</div>
<div class="t" style="left:1015.5px;top:749.5px;font-size:29px;line-height:31px;color:#ffffff;-webkit-text-stroke-width:0;transform:scaleX(1.0887);transform-origin:0 0;">修图的美仙姐姐</div>
</body></html>
